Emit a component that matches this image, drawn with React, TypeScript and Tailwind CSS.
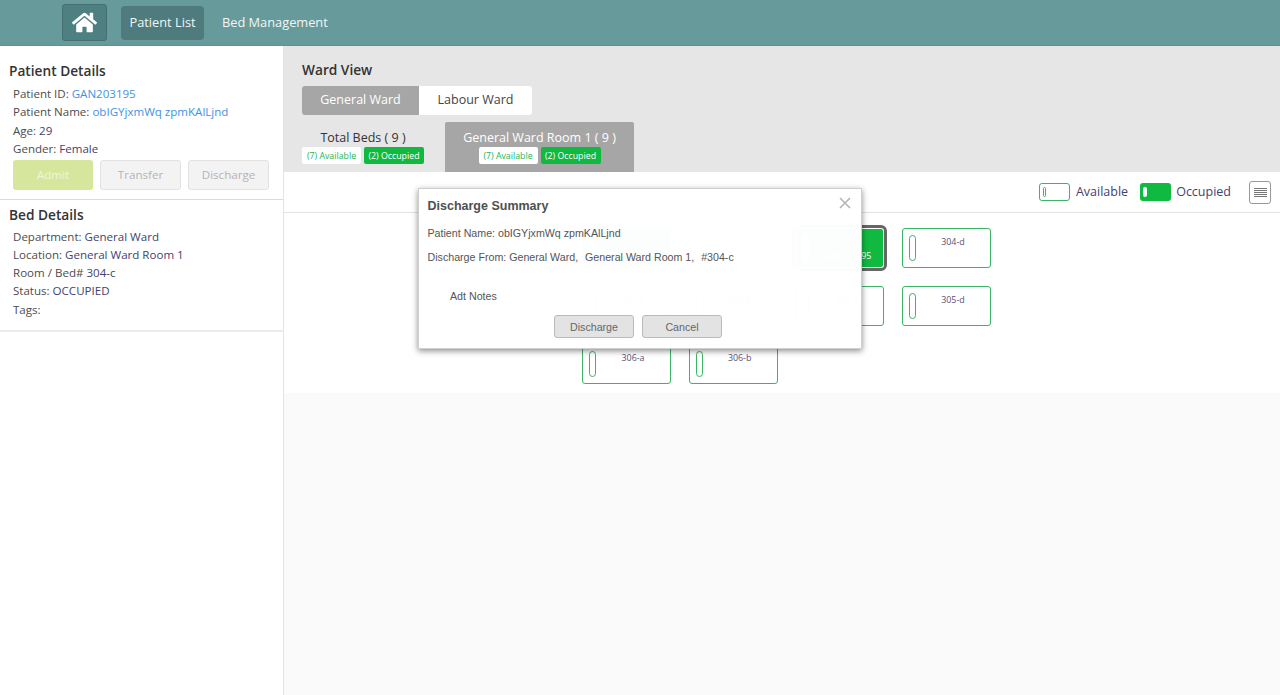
import React from "react";
import { FaHome } from "react-icons/fa";

const Field = ({ label, value, link }: { label: string; value: string; link?: boolean }) => (
  <div className="h-[18.3px] text-[11.55px] leading-[18.3px] whitespace-nowrap">
    <span className="font-medium text-[#4c4c4c]">{label}</span>{" "}
    <span className={link ? "text-[#3f92e2]" : "text-[#45416f]"}>{value}</span>
  </div>
);

const Badges = () => (
  <div className="flex justify-center gap-[3px] text-[8.8px] leading-[18px] h-[17px]">
    <span className="bg-white text-[#25b457] rounded-[2px] w-[59px] text-center whitespace-nowrap">(7) Available</span>
    <span className="bg-[#10b93f] text-white rounded-[2px] w-[60px] text-center whitespace-nowrap">(2) Occupied</span>
  </div>
);

const Bed = ({ name, occupied, selected, id }: { name: string; occupied?: boolean; selected?: boolean; id?: string }) => (
  <div
    className={`h-10 w-[89px] rounded-[3px] border flex pl-[6px] pt-[6px] ${
      occupied ? "bg-[#10b93f] border-[#10b93f]" : "bg-white border-[#3ab565]"
    } ${selected ? "outline-[3px] outline-[#666] border-white" : ""}`}
  >
    <div className={`w-[7px] h-[26px] rounded-full border ${occupied ? "bg-white border-white" : "border-[#3ab565]"}`} />
    <div className={`flex-1 text-center text-[8.9px] leading-[13px] ${occupied ? "text-white" : "text-[#55517c]"}`}>
      <div>{name}</div>
      {id && <div className="text-right pr-[12px] mt-[1px]">{id}</div>}
    </div>
  </div>
);

export default function App() {
  return (
    <div className="relative h-[695px] w-[1280px] overflow-hidden bg-white font-['Open_Sans',sans-serif]">
      <header className="h-[46px] bg-[#669a9b] flex items-center pl-[62px] border-b border-[#5f9192]">
        <button className="w-[45px] h-[37px] flex items-center justify-center rounded-[3px] border border-[#44706f] bg-[#4f8081]">
          <FaHome className="text-white text-[25px]" />
        </button>
        <button className="ml-[14px] h-[34px] w-[83px] rounded-[4px] bg-[#4f7b7c] text-[12.8px] text-[#f2f6f6]">Patient List</button>
        <span className="ml-[18px] text-[12.8px] text-[#f2f6f6]">Bed Management</span>
      </header>

      <div className="flex h-[649px]">
        <aside className="w-[284px] shrink-0 border-r border-[#e4e4e4] bg-white">
          <section className="h-[154px] pl-[9px] pr-[10px] border-b border-[#dcdcdc]">
            <h2 className="pt-[14px] text-[13.7px] leading-[22px] font-semibold text-[#333]">Patient Details</h2>
            <div className="pl-[4px] pt-[3px]">
              <Field label="Patient ID:" value="GAN203195" link />
              <Field label="Patient Name:" value="obIGYjxmWq zpmKAlLjnd" link />
              <Field label="Age:" value="29" />
              <Field label="Gender:" value="Female" />
            </div>
            <div className="flex gap-[7px] pl-[4px] pt-[2px] text-[11.6px] leading-[27px]">
              <button className="w-[80px] h-[30px] rounded-[3px] bg-[#d6e79d] text-[#f0f6da] pb-[2px]">Admit</button>
              <button className="w-[81px] h-[30px] rounded-[3px] bg-[#f3f3f3] border border-[#e2e2e2] text-[#b3b3b3] pb-[2px]">Transfer</button>
              <button className="w-[81px] h-[30px] rounded-[3px] bg-[#f3f3f3] border border-[#e2e2e2] text-[#b3b3b3] pb-[2px]">Discharge</button>
            </div>
          </section>
          <section className="h-[132px] pl-[9px] border-b-2 border-[#ececec]">
            <h2 className="pt-[4px] text-[13.7px] leading-[22px] font-semibold text-[#333]">Bed Details</h2>
            <div className="pl-[4px] pt-[1.5px]">
              <Field label="Department:" value="General Ward" />
              <Field label="Location:" value="General Ward Room 1" />
              <Field label="Room / Bed#" value="304-c" />
              <Field label="Status:" value="OCCUPIED" />
              <Field label="Tags:" value="" />
            </div>
          </section>
        </aside>

        <main className="flex-1 flex flex-col bg-[#fafafa]">
          <div className="h-[126px] bg-[#e6e6e6] pl-[18px] pt-[13px]">
            <h2 className="text-[13.7px] leading-[22px] font-semibold text-[#333]">Ward View</h2>
            <div className="mt-[5px] flex h-[29px] w-[230px] rounded-[3px] overflow-hidden text-[12.5px] leading-[28px]">
              <div className="w-[117px] bg-[#a6a6a6] text-white text-center font-medium">General Ward</div>
              <div className="flex-1 bg-white text-[#444] text-center">Labour Ward</div>
            </div>
            <div className="mt-[7px] flex h-[50px]">
              <div className="w-[122px] pt-[7px]">
                <div className="text-center text-[12.5px] leading-[18px] text-[#333]">Total Beds ( 9 )</div>
                <Badges />
              </div>
              <div className="ml-[21px] w-[189px] pt-[7px] bg-[#a6a6a6] rounded-t-[2px]">
                <div className="text-center text-[12.5px] leading-[18px] text-white font-medium">General Ward Room 1 ( 9 )</div>
                <Badges />
              </div>
            </div>
          </div>

          <div className="h-[41px] bg-white border-b border-[#e2e2e2] flex items-center justify-end pr-[9px] text-[12.5px] text-[#45416f]">
            <div className="w-[31px] h-[18px] rounded-[3px] border border-[#3ab565] flex items-center pl-[3px]">
              <div className="w-[3px] h-[10px] rounded-full border border-[#3ab565]" />
            </div>
            <span className="ml-[6px] pt-[1px]">Available</span>
            <div className="ml-[12px] w-[31px] h-[18px] rounded-[3px] bg-[#10b93f] flex items-center pl-[3px]">
              <div className="w-[4px] h-[10px] rounded-full bg-white" />
            </div>
            <span className="ml-[5px] pt-[1px]">Occupied</span>
            <button className="ml-[18px] w-[22px] h-[23px] rounded-[3px] border border-[#999] flex flex-col items-center justify-center gap-[1px]">
              <span className="w-[13px] h-[1px] bg-[#777]" />
              <span className="w-[13px] h-[1px] bg-[#777]" />
              <span className="w-[13px] h-[1px] bg-[#777]" />
              <span className="w-[13px] h-[1px] bg-[#777]" />
              <span className="w-[13px] h-[1px] bg-[#777]" />
            </button>
          </div>

          <div className="h-[180px] bg-white pl-[298px] pt-[15px]">
            <div className="grid grid-cols-[89px_89px_89px_89px] gap-x-[17.67px] gap-y-[18px]">
              <Bed name="304-a" occupied />
              <div />
              <Bed name="304-c" occupied selected id="GAN203195" />
              <Bed name="304-d" />
              <Bed name="305-a" />
              <Bed name="305-b" />
              <Bed name="305-c" />
              <Bed name="305-d" />
              <Bed name="306-a" />
              <Bed name="306-b" />
            </div>
          </div>
        </main>
      </div>

      <div className="absolute left-[418px] top-[188px] w-[444px] h-[161px] bg-white/[0.985] border border-[#cfcfcf] shadow-[0_2px_6px_rgba(0,0,0,0.45)] font-['Liberation_Sans',sans-serif] text-[#555] pl-[8.5px]">
        <button className="absolute right-[9px] top-[7px] text-[#b5b5b5]" aria-label="Close">
          <svg width="14" height="14" viewBox="0 0 14 14" fill="none" stroke="currentColor" strokeWidth="1.6">
            <path d="M2 2 L12 12 M12 2 L2 12" />
          </svg>
        </button>
        <h3 className="pt-[9px] text-[12.5px] leading-[17px] font-bold text-[#505050]">Discharge Summary</h3>
        <p className="pt-[12px] text-[10.67px] leading-[13px] whitespace-nowrap">Patient Name: obIGYjxmWq zpmKAlLjnd</p>
        <p className="pt-[11px] text-[10.67px] leading-[13px] whitespace-pre">
          Discharge From: General Ward,  <span className="ml-[1px]">General Ward Room 1,</span>  <span className="ml-[1px]">#304-c</span>
        </p>
        <p className="pt-[25.5px] pl-[22.5px] text-[10.67px] leading-[13px]">Adt Notes</p>
        <div className="pt-[12.5px] pl-[126.5px] flex gap-[8px] text-[10.67px]">
          <button className="w-[80px] h-[23px] rounded-[3px] border border-[#bbb] bg-[#e3e3e3] text-[#666]">Discharge</button>
          <button className="w-[80px] h-[23px] rounded-[3px] border border-[#bbb] bg-[#e3e3e3] text-[#666]">Cancel</button>
        </div>
      </div>
    </div>
  );
}
